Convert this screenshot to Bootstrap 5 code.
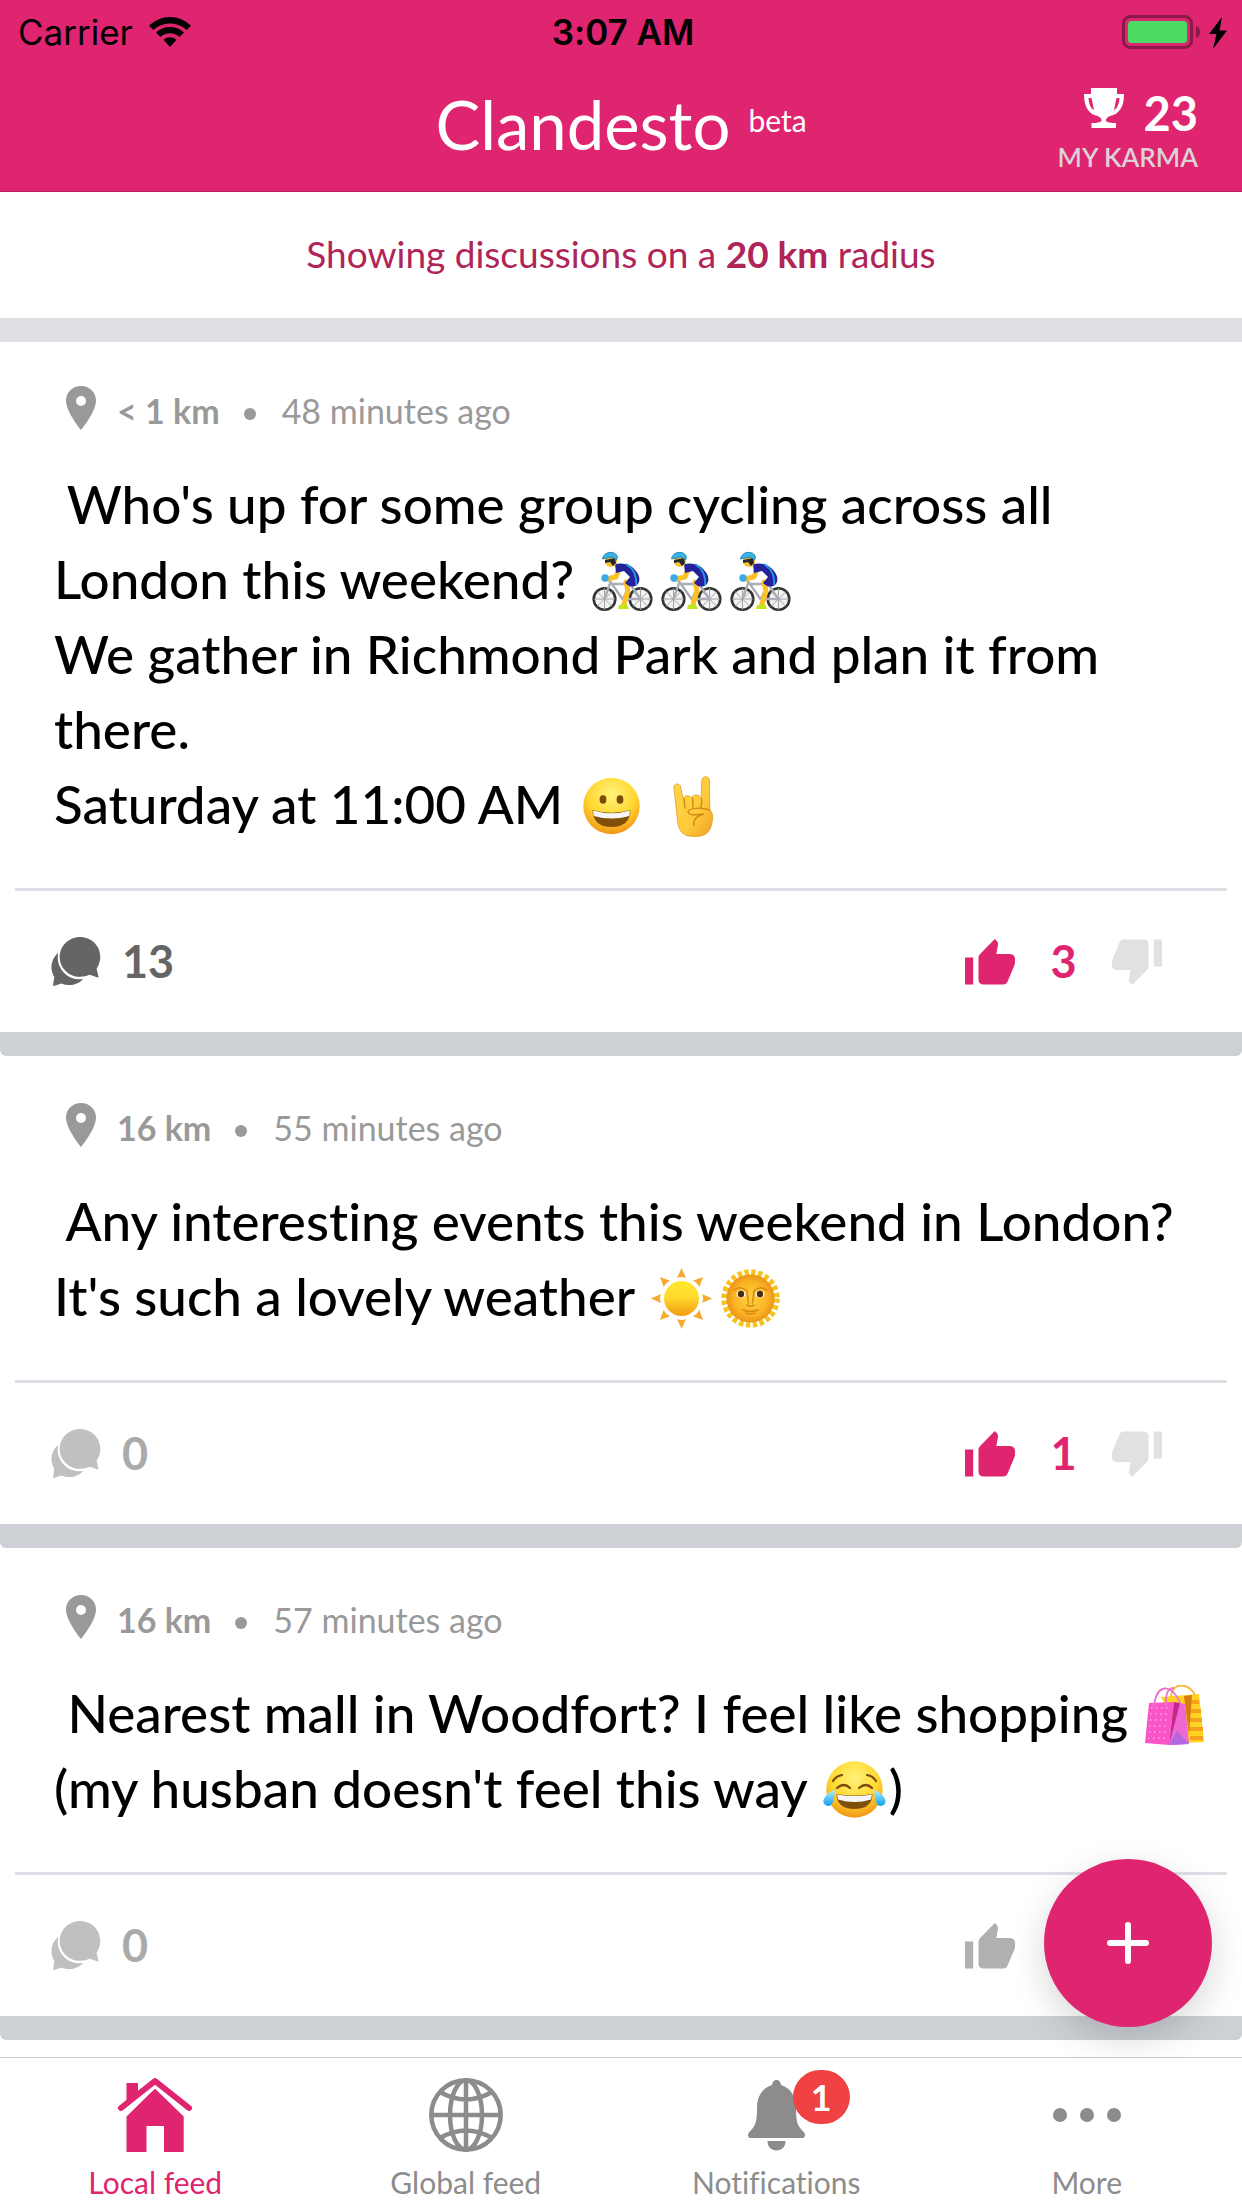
<!DOCTYPE html>
<html lang="en">
<head>
<meta charset="utf-8">
<meta name="viewport" content="width=device-width, initial-scale=1">
<title>Clandesto</title>
<link href="https://cdn.jsdelivr.net/npm/bootstrap@5.3.0/dist/css/bootstrap.min.css" rel="stylesheet">
<style>
:root { --pink: #df2470; --rule: #dfe0e5; --bar: #cdd0d5; }
body { font-family: Lato, "Open Sans", sans-serif; font-variant-ligatures: none; color: #000; background: #fff; padding-bottom: 151px; }
svg { display: block; flex: none; overflow: visible; }
button { border: 0; background: none; padding: 0; color: inherit; }
.top-area { background: var(--pink); border-bottom: 1px solid #b91f5e; }
.status { height: 64px; padding: 0 14px 0 18px; font-family: Inter, sans-serif; font-size: 35px; line-height: 64px; color: #000; }
.status > * { flex: 1 1 0; }
.clock { font-weight: 600; }
.title-row { height: 127px; padding: 0 44px; color: #fff; }
.title-row > * { flex: 1 1 0; }
.brand { font-size: 67px; line-height: 80px; padding-top: 20px; }
.brand-note { font-size: 30px; line-height: 40px; padding: 36px 0 0 18px; }
.karma-score { font-size: 47px; line-height: 50px; font-weight: 700; gap: 19px; padding-top: 24px; }
.karma-label { font-size: 26px; line-height: 38px; color: #dcd3d7; font-weight: 600; }
.radius-note { height: 126px; padding-bottom: 2px; font-size: 37px; color: #b02458; }
.feed { border-top: 24px solid var(--rule); }
.post { border-bottom: 24px solid var(--bar); border-radius: 6px; }
.post + .post { padding-top: 3px; }
.meta { padding: 44px 54px 0 66px; height: 124px; font-size: 34px; line-height: 50px; color: #999; }
.meta strong { padding-left: 21px; }
.dot { width: 12px; height: 12px; border-radius: 50%; background: #999; margin: 22px 26px 0 24px; }
.words { margin: 0; padding: 0 30px 47px 54px; font-size: 53px; line-height: 75px; font-weight: 500; }
.words svg { display: inline-block; width: 69px; height: 62px; vertical-align: -14px; }
.foot { margin: 0 15px; padding: 0 65px 0 36px; height: 144px; border-top: 3px solid var(--rule); font-size: 45px; font-weight: 700; }
.replies { color: #656565; gap: 21px; font-weight: 700; }
.replies.none { color: #aaa; }
.replies.none svg { color: #c0c0c0; }
.up { color: var(--pink); }
.up.idle { color: #b0b0b0; }
.votes { width: 97px; color: var(--pink); }
.down { color: #e1e1e1; }
.fab { position: fixed; right: 30px; bottom: 181px; width: 168px; height: 168px; border-radius: 50%; background: var(--pink); box-shadow: 0 12px 36px rgba(0,0,0,.16); color: #fff; z-index: 1020; }
.tabs { height: 151px; background: #fff; border-top: 1px solid #c8c8cb; }
.tabs a { flex: 1 1 0; color: #8c8c8c; text-decoration: none; font-size: 30px; line-height: 36px; padding-top: 20px; gap: 12px; }
.tabs a.on { color: var(--pink); }
.tab-count { position: absolute; left: 100%; top: -8px; margin-left: -12px; width: 57px; height: 54px; border-radius: 27px; background: #f04242; color: #fff; font-size: 36px; line-height: 54px; font-weight: 700; text-align: center; }
</style>
<script src="https://cdn.jsdelivr.net/npm/bootstrap@5.3.0/dist/js/bootstrap.bundle.min.js"></script>
</head>
<body>
<svg width="0" height="0" class="position-absolute" aria-hidden="true">
  <defs>
    <radialGradient id="gFace" cx=".5" cy=".3" r=".75"><stop offset="0" stop-color="#fff27a"/><stop offset=".55" stop-color="#ffd831"/><stop offset="1" stop-color="#f08a12"/></radialGradient>
    <linearGradient id="gSun" x1="0" y1="0" x2="0" y2="1"><stop offset="0" stop-color="#ffe92e"/><stop offset=".45" stop-color="#ffdb2e"/><stop offset="1" stop-color="#f39a12"/></linearGradient>
    <radialGradient id="gOrange" cx=".5" cy=".5" r=".5"><stop offset="0" stop-color="#ffd23c"/><stop offset=".7" stop-color="#fbb324"/><stop offset="1" stop-color="#ea9418"/></radialGradient>
    <linearGradient id="gHand" x1="0" y1="0" x2="1" y2="1"><stop offset="0" stop-color="#ffd84a"/><stop offset=".6" stop-color="#ffca3a"/><stop offset="1" stop-color="#eda024"/></linearGradient>
    <linearGradient id="gTear" x1="0" y1="0" x2="0" y2="1"><stop offset="0" stop-color="#b5ecff"/><stop offset="1" stop-color="#0aa2ec"/></linearGradient>
  </defs>
  <symbol id="pin" viewBox="0 0 30 44"><path fill="currentColor" fill-rule="evenodd" d="M15 0C6.600 0 0 6.300 0 14.500 0 26 15 44 15 44s15-18 15-29.500C30 6.300 23.400 0 15 0zm0 10a5 5 0 1 1 0 10 5 5 0 0 1 0-10z"/></symbol>
  <symbol id="chat" viewBox="0 0 50 49"><path fill="currentColor" d="M10 14A18.500 18.500 0 0 0 3.300 40l-1.200 8.200c-.1.500.3.900.8.700l7.600-2.500C18 49.500 27 48.500 33 41z"/><circle cx="28.500" cy="20.500" r="21.800" fill="#fff"/><path fill="currentColor" d="M29 0c11.300 0 20.300 8.800 20.300 19.800 0 4.500-1.400 8.500-3.700 11.900l1.900 8c.1.500-.3.900-.8.700l-7.900-2.600c-2.900 1.200-6 2-9.800 2C17.700 39.800 8.700 31 8.700 20S17.700 0 29 0z"/></symbol>
  <symbol id="thumb" viewBox="0 0 50 46"><path fill="currentColor" d="M0 18.500h8.200V45.500H0zM29.800 0l2.200 2.200q1.300 1.500 1 3.500l-1.700 9.300H45q5 .3 5 5v4q-.1 1.200-.6 2.300L42.700 42.300q-1.300 3.200-4.500 3.200H18q-4.500-.4-4.500-5V18.500q0-2 1.600-3.500z"/></symbol>
  <symbol id="bike" viewBox="0 0 69 62">
    <g fill="#f3f3f3" stroke="#333" stroke-width="2.600"><circle cx="16.500" cy="48" r="10.800"/><circle cx="52.500" cy="48" r="10.800"/></g>
    <path stroke="#999" stroke-width=".9" d="M16.500 37v22M6 48h21M9 40.500l15 15M24 40.500l-15 15M52.500 37v22M42 48h21M45 40.500l15 15M60 40.500l-15 15"/>
    <path fill="none" stroke="#a9adb5" stroke-width="2.400" d="M16.500 48l6-17 12 17h18L42 33H23M35 48l7-15M15 26l8 5"/>
    <path fill="none" stroke="#fdc126" stroke-width="5" stroke-linecap="round" stroke-linejoin="round" d="M31 18l-3 8-10 2M38 31l2 9-4 13"/>
    <path fill="#25219b" d="M27 13c10-2 18 1 23 10 2 4 2 8-1 11-5 3-9 1-12-2l5-6-6-6-8 2z"/><path fill="none" stroke="#2198e4" stroke-width="1.800" d="M38 13c8 5 11 12 10 21"/>
    <circle cx="23" cy="10" r="6" fill="#fbc12e"/><path fill="#22292b" d="M17 9l10-2 1 5-3 3-3-4-5 1z"/><path fill="#35b3ec" stroke="#16759c" stroke-width=".8" d="M14.500 8c1-8 13-9 15-2l-1 3-4-3z"/>
    <circle cx="17" cy="27" r="3.700" fill="#39a9e7"/><path fill="#c3e51e" d="M31 54l8-1 2 5H30z"/>
  </symbol>
  <symbol id="grin" viewBox="0 0 69 62"><circle cx="34.500" cy="30" r="28.200" fill="url(#gFace)"/><ellipse cx="26" cy="23.500" rx="3.400" ry="4.300" fill="#7b4a07"/><ellipse cx="43" cy="23.500" rx="3.400" ry="4.300" fill="#7b4a07"/><path fill="#80500b" d="M15.500 34q19 5.500 38 0Q53 51 34.500 51T15.500 34z"/><path fill="#f5f5fa" d="M16 34.500q18.500 5.500 37 0l-.7 5.500q-17.800 5-35.600 0z"/></symbol>
  <symbol id="rock" viewBox="0 0 69 62"><path fill="url(#gHand)" stroke="#e19b1f" stroke-width=".8" d="M15 12c-.7-5 5.600-5.500 6.700-1l2.400 12c1-3.500 6-4.500 8.400-1 1.500-4 8.500-4.500 9.700 1l.6-18.500c.3-5 7.400-5 7.700 0l.3 29c4 5 3 9 2 14-1.500 8.500-6 13-17 13-13 0-16-6-17.300-16.500z"/><path fill="none" stroke="#d28d18" stroke-width="1.500" stroke-linecap="round" d="M25 23l1 9M33.500 22l.5 9M43 23l-1 9M29 36c1-5 16-4 22-2M29 36c2 5 10 2 16 2-7 2-11 6-10 11"/></symbol>
  <symbol id="sun" viewBox="0 0 69 62"><g fill="#f6aa2f"><path id="ray" d="M34.500 0l4.500 10q-4.500-2-9 0z"/><use href="#ray" transform="rotate(45 34.500 30.500)"/><use href="#ray" transform="rotate(90 34.500 30.500)"/><use href="#ray" transform="rotate(135 34.500 30.500)"/><use href="#ray" transform="rotate(180 34.500 30.500)"/><use href="#ray" transform="rotate(225 34.500 30.500)"/><use href="#ray" transform="rotate(270 34.500 30.500)"/><use href="#ray" transform="rotate(315 34.500 30.500)"/></g><circle cx="34.500" cy="30.500" r="17.500" fill="url(#gSun)"/></symbol>
  <symbol id="sunface" viewBox="0 0 69 62"><circle cx="34.500" cy="30.500" r="26" fill="none" stroke="#f6c31c" stroke-width="6.500" stroke-dasharray="4.266 2.540"/><circle cx="34.500" cy="30.500" r="24" fill="url(#gOrange)"/><path fill="none" stroke="#d98a16" stroke-width="1.600" stroke-linecap="round" d="M18 22q7-5 13 1l1.500 12M51 22q-7-5-13 1l-1.500 12M31 37q3.500 2.500 7 0M27 42q7.500 3 15 0M30 45q4.500 2 9 0"/><g fill="#fff"><ellipse cx="25" cy="26" rx="4.500" ry="3.500"/><ellipse cx="44" cy="26" rx="4.500" ry="3.500"/></g><g fill="#4a2c12"><circle cx="25" cy="26" r="3.200"/><circle cx="44" cy="26" r="3.200"/></g></symbol>
  <symbol id="bags" viewBox="0 0 69 62"><path fill="#ffd321" d="M20 12l38-3 5 48-20 1z"/><path stroke="#f5a11b" stroke-width="4" d="M45 17h13M46 26h14M47 35h14M48 44h14M49 53h13"/><path fill="#d77b10" d="M43 11l8-1-3 40z"/><path fill="none" stroke="#f7b634" stroke-width="1.800" d="M30 12c1-15 17-15 24-2"/><path fill="#fa55c8" d="M8 18l25-1-5 43-24-2z"/><path fill="#c62490" d="M33 17l-5 43 13-30-2-12z"/><path fill="#ee67d2" d="M39 18l5 1 4 40-20 1z"/><path fill="#b367df" d="M28 60l8-14 12 13z"/><path stroke="#ffa5e6" stroke-width="1.500" stroke-dasharray="1.500 3.500" d="M10 23h20M9 29h20M9 35h20M8 41h19M8 47h19M7 53h19"/><path fill="none" stroke="#ed72ce" stroke-width="1.800" d="M13 22C15-2 31-2 39 18M25 21C24 5 29 3 33 3"/></symbol>
  <symbol id="joy" viewBox="0 0 69 62"><circle cx="34.500" cy="29.500" r="28.200" fill="url(#gFace)"/><path fill="none" stroke="#7b4a07" stroke-width="2.200" stroke-linecap="round" d="M13 21q3-5 9-6M56 21q-3-5-9-6M17 28q7-6 13 0M39 28q7-6 13 0"/><path fill="#80500b" d="M16.500 34q18 3 36 0Q52 49 34.500 49T16.500 34z"/><path fill="#f5f5fa" d="M17 34.500q17.500 3 35 0l-1 5q-16.500 5-33 0z"/><path fill="url(#gTear)" d="M15 30C14 40 13 46 8 46-1 44 4 34 15 30zM54 30c1 10 2 16 7 16 9-2 4-12-7-16z"/></symbol>
</svg>

<header class="top-area">
  <div class="status d-flex">
    <div class="d-flex align-items-center"><span>Carrier</span>
      <svg class="ms-3" width="42" height="30" viewBox="0 0 42 30" role="img" aria-label="Wi-Fi"><path d="M0 8.800C12-3 30-3 42 8.800L37.500 13C28.500 4.300 13.500 4.300 4.500 13zM7 15.500c8-7.300 20-7.300 28 0L30.500 20c-5.500-5-13.500-5-19 0zM14.500 22.700c4-3.300 9-3.300 13 0L21 30z"/></svg>
    </div>
    <div class="clock text-center">3:07 AM</div>
    <div class="d-flex align-items-center justify-content-end">
      <svg width="106" height="34" viewBox="0 0 106 34" role="img" aria-label="Battery charging"><rect x="1.500" y="1.500" width="68" height="31" rx="7" fill="none" stroke="#8a1849" stroke-width="3"/><rect x="6" y="6" width="59" height="22" rx="3.500" fill="#4cd964"/><path fill="#8a1849" d="M74 11q4 2 4 6t-4 6z"/><path d="M100 2L87 19h7.500L91 34l14-18.500h-7.500z"/></svg>
    </div>
  </div>
  <div class="title-row d-flex">
    <div></div>
    <div class="d-flex justify-content-center"><h1 class="brand fw-normal m-0">Clandesto</h1><span class="brand-note">beta</span></div>
    <div class="text-end">
      <div class="karma-score d-flex justify-content-end">
        <svg width="40" height="40" viewBox="0 0 40 40" aria-hidden="true"><path fill="#fff" fill-rule="evenodd" d="M7 0h26v6h7c0 12-4 20-14 22-2 1-4 2-4 4v1q2 2 10 2v5H7.500v-5q8 0 10-2v-1c0-2-2-3-4-4C4 26 0 18 0 6h7zM4.500 10c.5 6 2 10 5.500 12L7.500 10zm31 0h-3L30 22c3.500-2 5-6 5.500-12z"/></svg>
        <span>23</span>
      </div>
      <div class="karma-label">MY KARMA</div>
    </div>
  </div>
</header>

<main>
  <div class="radius-note d-flex align-items-center justify-content-center"><span>Showing discussions on a <strong>20 km</strong> radius</span></div>
  <div class="feed">
    <article class="post">
      <div class="meta d-flex"><svg width="30" height="44"><use href="#pin"/></svg><strong>&lt; 1 km</strong><span class="dot"></span><span>48 minutes ago</span></div>
      <p class="words">&nbsp;Who's up for some group cycling across all London this weekend? <svg role="img" aria-label="cyclist"><use href="#bike"/></svg><svg role="img" aria-label="cyclist"><use href="#bike"/></svg><svg role="img" aria-label="cyclist"><use href="#bike"/></svg><br>We gather in Richmond Park and plan it from there.<br>Saturday at 11:00 AM <svg role="img" aria-label="grinning face"><use href="#grin"/></svg> <svg role="img" aria-label="sign of the horns"><use href="#rock"/></svg></p>
      <div class="foot d-flex align-items-center">
        <button type="button" class="replies d-flex align-items-center me-auto" aria-label="Replies"><svg width="50" height="49"><use href="#chat"/></svg><span>13</span></button>
        <button type="button" class="up" aria-label="Like"><svg width="50" height="46"><use href="#thumb"/></svg></button><span class="votes text-center">3</span><button type="button" class="down" aria-label="Dislike"><svg width="50" height="46" viewBox="0 0 50 46"><use href="#thumb" transform="rotate(180 25 23)"/></svg></button>
      </div>
    </article>
    <article class="post">
      <div class="meta d-flex"><svg width="30" height="44"><use href="#pin"/></svg><strong>16 km</strong><span class="dot"></span><span>55 minutes ago</span></div>
      <p class="words">&nbsp;Any interesting events this weekend in London? It's such a lovely weather <svg role="img" aria-label="sun"><use href="#sun"/></svg><svg role="img" aria-label="sun with face"><use href="#sunface"/></svg></p>
      <div class="foot d-flex align-items-center">
        <button type="button" class="replies none d-flex align-items-center me-auto" aria-label="Replies"><svg width="50" height="49"><use href="#chat"/></svg><span>0</span></button>
        <button type="button" class="up" aria-label="Like"><svg width="50" height="46"><use href="#thumb"/></svg></button><span class="votes text-center">1</span><button type="button" class="down" aria-label="Dislike"><svg width="50" height="46" viewBox="0 0 50 46"><use href="#thumb" transform="rotate(180 25 23)"/></svg></button>
      </div>
    </article>
    <article class="post">
      <div class="meta d-flex"><svg width="30" height="44"><use href="#pin"/></svg><strong>16 km</strong><span class="dot"></span><span>57 minutes ago</span></div>
      <p class="words">&nbsp;Nearest mall in Woodfort? I feel like shopping <svg role="img" aria-label="shopping bags"><use href="#bags"/></svg><br>(my husban doesn't feel this way <svg role="img" aria-label="face with tears of joy"><use href="#joy"/></svg>)</p>
      <div class="foot d-flex align-items-center">
        <button type="button" class="replies none d-flex align-items-center me-auto" aria-label="Replies"><svg width="50" height="49"><use href="#chat"/></svg><span>0</span></button>
        <button type="button" class="up idle" aria-label="Like"><svg width="50" height="46"><use href="#thumb"/></svg></button><span class="votes"></span><button type="button" class="down" aria-label="Dislike"><svg width="50" height="46" viewBox="0 0 50 46"><use href="#thumb" transform="rotate(180 25 23)"/></svg></button>
      </div>
    </article>
  </div>
</main>

<button type="button" class="fab d-flex align-items-center justify-content-center" aria-label="New post"><svg width="42" height="42" viewBox="0 0 42 42"><path stroke="#fff" stroke-width="6" stroke-linecap="round" d="M21 3v36M3 21h36"/></svg></button>

<nav class="tabs fixed-bottom d-flex">
  <a href="#" class="on d-flex flex-column align-items-center"><svg width="74" height="74" viewBox="0 0 74 74" aria-hidden="true"><path fill="currentColor" d="M8.500 5H20v14L8.500 29zM37 10.500l28.700 28V74H46V48H28.500v26h-20V38.500z"/><path fill="none" stroke="#fff" stroke-width="4" d="M3 37L37 8l34 29"/><path fill="none" stroke="currentColor" stroke-width="6" stroke-linecap="round" stroke-linejoin="round" d="M3 30L37 3l34 27"/></svg><span>Local feed</span></a>
  <a href="#" class="d-flex flex-column align-items-center"><svg width="74" height="74" viewBox="0 0 74 74" aria-hidden="true"><g fill="none" stroke="currentColor" stroke-width="4.500"><circle cx="37" cy="37" r="34.700"/><path d="M37 2v70M2 37h70M11 14q26 15 52 0M11 60q26-15 52 0"/><ellipse cx="37" cy="37" rx="16" ry="34.700"/></g></svg><span>Global feed</span></a>
  <a href="#" class="d-flex flex-column align-items-center"><span class="position-relative"><svg width="57" height="74" viewBox="0 0 57 74" aria-hidden="true"><path fill="currentColor" d="M28.500 2c2.600 0 4.300 2 4.500 5C43 10 48 19 48 29c0 13 1 17 4.500 21.500 2 2.500 4.500 4 4.500 6.500s-1.500 3-3 3H3c-1.500 0-3-.5-3-3s2.500-4 4.500-6.500C8 46 9 42 9 29 9 19 14 10 24 7c.2-3 1.900-5 4.500-5zM19.500 63h18c0 6-4 9.500-9 9.500s-9-3.500-9-9.500z"/></svg><span class="tab-count">1</span></span><span>Notifications</span></a>
  <a href="#" class="d-flex flex-column align-items-center"><svg width="74" height="74" viewBox="0 0 74 74" aria-hidden="true"><g fill="currentColor"><circle cx="10" cy="37" r="7"/><circle cx="37" cy="37" r="7"/><circle cx="64" cy="37" r="7"/></g></svg><span>More</span></a>
</nav>
</body>
</html>
